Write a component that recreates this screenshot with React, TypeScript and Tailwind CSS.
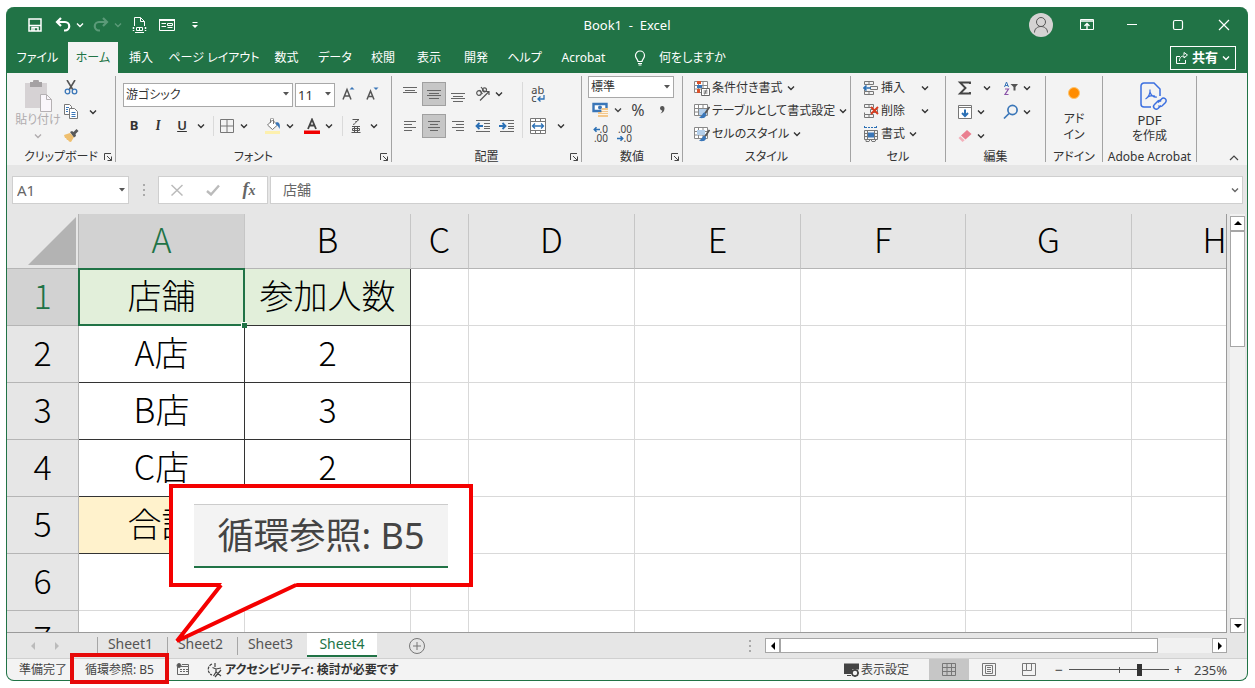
import { clsx } from "clsx";
import type { ReactNode } from "react";

const TABS = [
  { label: "ファイル", width: "w-[61px]" },
  { label: "ホーム", width: "w-[50px]", active: true },
  { label: "挿入", width: "w-[46px]" },
  { label: "ページ レイアウト", width: "w-[100px]" },
  { label: "数式", width: "w-[45px]" },
  { label: "データ", width: "w-[52px]" },
  { label: "校閲", width: "w-[44px]" },
  { label: "表示", width: "w-[48px]" },
  { label: "開発", width: "w-[46px]" },
  { label: "ヘルプ", width: "w-[51px]" },
  { label: "Acrobat", width: "w-[67px]" },
];

const COLUMNS = [
  { name: "A", width: "w-[166px]" },
  { name: "B", width: "w-[166px]" },
  { name: "C", width: "w-[58px]" },
  { name: "D", width: "w-[166px]" },
  { name: "E", width: "w-[166px]" },
  { name: "F", width: "w-[165px]" },
  { name: "G", width: "w-[166px]" },
  { name: "H", width: "w-[166px]" },
];

const ROWS = [
  ["店舗", "参加人数"],
  ["A店", "2"],
  ["B店", "3"],
  ["C店", "2"],
  ["合計", ""],
  [],
  [],
];

const SHEETS = ["Sheet1", "Sheet2", "Sheet3", "Sheet4"];

function Chevron({ className }: { className?: string }) {
  return (
    <svg className={clsx("h-2 w-2 shrink-0", className)} fill="none" stroke="currentColor" strokeWidth="1.4" viewBox="0 0 8 8">
      <path d="M1 2.5 4 5.5 7 2.5" />
    </svg>
  );
}

function Caret() {
  return (
    <svg className="pointer-events-none absolute right-1 top-1/2 h-1 w-1.5 -translate-y-1/2" viewBox="0 0 6 4">
      <path d="M0 0h6L3 3.6z" fill="#555" />
    </svg>
  );
}

function IconButton({
  label,
  className,
  active,
  children,
}: {
  label: string;
  className?: string;
  active?: boolean;
  children: ReactNode;
}) {
  return (
    <button
      aria-label={label}
      className={clsx(
        "flex h-6 shrink-0 items-center justify-center",
        active && "border border-[#a0a0a0] bg-[#c6c6c6]",
        className ?? "w-6",
      )}
      type="button"
    >
      {children}
    </button>
  );
}

function Menu({ label, className }: { label: string; className?: string }) {
  return (
    <IconButton className={className ?? "w-[18px]"} label={`${label}のオプション`}>
      <Chevron />
    </IconButton>
  );
}

function Group({
  title,
  width,
  launcher,
  children,
}: {
  title: string;
  width: string;
  launcher?: boolean;
  children: ReactNode;
}) {
  return (
    <section className={clsx("flex h-[86px] shrink-0 flex-col border-r border-[#a3a3a3]", width)}>
      <div className="h-[73px] shrink-0">{children}</div>
      <div className="flex h-4 shrink-0 items-center">
        {launcher ? <span className="w-3" /> : null}
        <h2 className="flex-1 whitespace-nowrap text-center text-xs leading-4">{title}</h2>
        {launcher ? (
          <button aria-label={`${title}の設定`} className="w-3" type="button">
            <svg className="h-2.5 w-2.5" fill="none" stroke="#444" viewBox="0 0 10 10">
              <path d="M1.5 8V1.5H8M4 4l4.5 4.5M8.5 4.5v4h-4" />
            </svg>
          </button>
        ) : null}
      </div>
    </section>
  );
}

/* Horizontal rules used by every alignment icon: [x, y, length] */
function Lines({ rows }: { rows: number[][] }) {
  return (
    <svg className="h-4 w-4" stroke="#666" viewBox="0 0 16 16">
      {rows.map(([x, y, length]) => (
        <path d={`M${x} ${y}.5h${length}`} key={y} />
      ))}
    </svg>
  );
}

function IndentIcon({ out }: { out?: boolean }) {
  return (
    <svg className="h-4 w-4" fill="none" viewBox="0 0 16 16">
      <path d="M1 2.5h14M9 5.5h6M9 8.5h6M9 10.5h6M1 13.5h14" stroke="#666" />
      <path d={out ? "M8 8H2M4.5 5 1.5 8l3 3" : "M0 8h6M3.5 5l3 3-3 3"} stroke="#2b70b5" strokeWidth="1.8" />
    </svg>
  );
}

function TableIcon({ variant }: { variant: "rules" | "table" | "cell" }) {
  return (
    <svg className="h-4 w-4 shrink-0" fill="none" viewBox="0 0 16 16">
      <path d="M.5 1.5h13v11H.5zM.5 5.5h13M.5 9h13M4.500 1.5v11M9 1.5v11" fill="#fff" stroke="#888" />
      {variant === "rules" ? (
        <>
          <path d="M3 1h4v3H3zM3 9h3v4H3z" fill="#d9532c" />
          <path d="M3 5h5v3H3z" fill="#3a76b8" />
          <path d="M7.5 8.5h8v7h-8z" fill="#fff" stroke="#666" />
          <path d="M9.500 11h4M9.500 13h4M12.500 9.5l-2 5" stroke="#555" strokeWidth=".8" />
        </>
      ) : (
        <>
          <path d={variant === "table" ? "M5 6h8v6H5z" : "M3 4h8v5H3z"} fill="#b4cfeb" />
          <path d="M15.500 4 11 10.500" stroke="#555" strokeWidth="1.800" />
          <path d="M10.5 9.5c-2 0-2 3.500-5.500 5 3 1.500 7.500.5 7-3z" fill="#3a76b8" />
        </>
      )}
    </svg>
  );
}

function CellIcon({ variant }: { variant: "insert" | "delete" | "format" }) {
  if (variant === "format") {
    return (
      <svg className="h-4 w-4 shrink-0" fill="none" viewBox="0 0 16 16">
        <path d="M1.500 0v3M13.500 0v3M2 1.500h11" stroke="#2b70b5" strokeDasharray="2 1" />
        <path d="M1.500 4.500h13v9h-13zM1.500 7.500h13M1.500 10.500h13M4.500 4.500v9M11.500 4.500v9M3 13.500v2h3l1-2h1l1 2h3l1-2" stroke="#777" />
        <path d="M5 6.500h6v5H5z" fill="#3a76b8" />
      </svg>
    );
  }
  return (
    <svg className="h-4 w-4 shrink-0" fill="none" viewBox="0 0 16 16">
      <path d="M1.500 1.500h9v3h-9zM6 1.500v3M1.500 11.500h9v3h-9zM6 11.500v3M1.500 9.500v2M7.500 6.500h7v3h-7z" stroke="#777" />
      {variant === "insert" ? (
        <path d="M8 8H1M3.500 5.500 1 8l2.500 2.500" stroke="#2b70b5" strokeWidth="1.600" />
      ) : (
        <path d="m8 4 7 7M15 4l-7 7" stroke="#d83b1e" strokeWidth="1.900" />
      )}
    </svg>
  );
}

function TitleBar() {
  return (
    <header className="grid h-[35px] grid-cols-[1fr_auto_1fr] items-center text-white">
      <div className="flex items-center pl-5">
        <IconButton className="w-4" label="上書き保存">
          <svg className="h-3.5 w-3.5" fill="none" stroke="#fff" strokeWidth="1.500" viewBox="0 0 14 14">
            <path d="M1 1h12v12H1zM1 7.500h12" />
            <path d="M4 13V9.500h6V13M6 10v3" />
          </svg>
        </IconButton>
        <IconButton className="ml-3 w-4" label="元に戻す">
          <svg className="h-4 w-4" fill="none" stroke="#fff" strokeWidth="2.200" viewBox="0 0 16 16">
            <path d="M6 1 2 5l4 4M2.500 5H10a4 4 0 0 1 0 8.500H9" />
          </svg>
        </IconButton>
        <Menu className="w-[18px]" label="元に戻す" />
        <span className="ml-1 flex text-[#5b9a78]">
          <IconButton className="w-4" label="やり直し">
            <svg className="h-4 w-4" fill="none" stroke="currentColor" strokeWidth="2.200" viewBox="0 0 16 16">
              <path d="m10 1 4 4-4 4M13.500 5H6a4 4 0 0 0 0 8.500h1" />
            </svg>
          </IconButton>
          <Menu className="w-[18px]" label="やり直し" />
        </span>
        <IconButton className="ml-1 w-4" label="印刷プレビュー">
          <svg className="h-4 w-4" fill="none" stroke="#fff" viewBox="0 0 16 16">
            <path d="M3.500 9V.5h6l4 4V9M9.500.5v4h4M4 15.500h9" />
            <path d="M2.500 10v4M14.500 10v4" strokeDasharray="2 1" strokeWidth="1.500" />
            <path d="M5.500 10.500h6v3h-6zM8.500 10.500v3" />
          </svg>
        </IconButton>
        <IconButton className="ml-3 w-4" label="フォーム">
          <svg className="h-4 w-4" fill="none" stroke="#fff" viewBox="0 0 16 16">
            <path d="M.5 2.500h15v11H.5zM2.500 6.500H7M2.500 9.500H7M8.500 6.500h5v2h-5zM8.500 10.500h5" />
            <path d="M0 3h16" strokeWidth="2" />
          </svg>
        </IconButton>
        <IconButton className="ml-3 w-4" label="クイック アクセス ツール バーのカスタマイズ">
          <svg className="h-2 w-2" fill="#fff" viewBox="0 0 8 8">
            <path d="M1.500 1h5v1h-5zM1 4h6L4 7z" />
          </svg>
        </IconButton>
      </div>
      <h1 className="whitespace-pre text-[13px] leading-4">Book1  -  Excel</h1>
      <div className="flex items-center justify-end">
        <button aria-label="アカウント" className="mr-[11px] flex h-6 w-6 justify-center overflow-hidden rounded-full bg-[#d5d3d3]" type="button">
          <svg className="h-6 w-6" fill="none" stroke="#555" viewBox="0 0 24 24">
            <circle cx="12" cy="9" r="4.500" />
            <path d="M5.500 19.500c0-8 13-8 13 0" />
          </svg>
        </button>
        <IconButton className="w-[45px]" label="リボンの表示オプション">
          <svg className="h-3.5 w-3.5" fill="none" stroke="#fff" viewBox="0 0 14 14">
            <path d="M.5 1.500h13v10H.5z" />
            <path d="M0 3h14M7 11V5.500M4.500 8 7 5.500 9.500 8" strokeWidth="1.400" />
          </svg>
        </IconButton>
        <IconButton className="w-[46px]" label="最小化">
          <svg className="h-3 w-3" stroke="#fff" viewBox="0 0 12 12">
            <path d="M1 5.500h10" />
          </svg>
        </IconButton>
        <IconButton className="w-[46px]" label="最大化">
          <svg className="h-3 w-3" fill="none" stroke="#fff" strokeWidth="1.200" viewBox="0 0 12 12">
            <rect height="9" rx="1.500" width="9" x="1.500" y="1.500" />
          </svg>
        </IconButton>
        <IconButton className="w-[46px]" label="閉じる">
          <svg className="h-3 w-3" stroke="#fff" strokeWidth="1.200" viewBox="0 0 12 12">
            <path d="m1 1 10 10M11 1 1 11" />
          </svg>
        </IconButton>
      </div>
    </header>
  );
}

function TabBar() {
  return (
    <nav className="flex h-[31px] items-center text-xs text-white">
      {TABS.map((tab) => (
        <button
          className={clsx(
            "h-full shrink-0 whitespace-nowrap text-center leading-4",
            tab.width,
            tab.active && "bg-[#f3f3f3] text-[#217346]",
          )}
          key={tab.label}
          type="button"
        >
          {tab.label}
        </button>
      ))}
      <button className="ml-4 flex shrink-0 items-center gap-3" type="button">
        <svg className="h-4 w-3.5" fill="none" stroke="#fff" strokeWidth="1.200" viewBox="0 0 14 16">
          <path d="M5 11.500c0-2-2.500-3-2.500-6a4.500 4.500 0 0 1 9 0c0 3-2.500 4-2.500 6zM5 13.500h4M5.500 15h3" />
        </svg>
        何をしますか
      </button>
      <button
        className="ml-auto mr-[11px] flex h-6 w-[66px] shrink-0 items-center justify-center gap-1 border border-white text-[13px] font-bold"
        type="button"
      >
        <svg className="h-3 w-3" fill="none" stroke="#fff" viewBox="0 0 12 12">
          <path d="M4 4.500H.5v7h9V8M3.500 9c0-4 2-5 4.500-5V6l3.500-3L8 .5V3" />
        </svg>
        共有
        <Chevron className="h-1.5 w-1.5" />
      </button>
    </nav>
  );
}

function ClipboardGroup() {
  return (
    <Group launcher title="クリップボード" width="w-[109px]">
      <div className="flex">
        <button className="ml-2 flex w-[46px] flex-col items-center pt-1 text-[#b0acae]" type="button">
          <svg className="h-8 w-8" viewBox="0 0 32 32">
            <path d="M3 3h22v25H3z" fill="#d6d2d4" />
            <path d="M8 2h3a3 3 0 0 1 6 0h3v5H8z" fill="#a5a1a3" />
            <path d="M18.500 14.500h6l5 5v12h-11z" fill="#faf6fb" stroke="#b5b1b3" />
            <path d="M24.500 14.500v5h5" fill="none" stroke="#b5b1b3" />
          </svg>
          <span className="whitespace-nowrap text-xs leading-4">貼り付け</span>
          <Chevron className="mt-1" />
        </button>
        <div className="grid grid-cols-[20px_24px] items-center">
          <IconButton className="w-5" label="切り取り">
            <svg className="h-4 w-4" fill="none" viewBox="0 0 16 16">
              <path d="M4 0l6 10M12 0 6 10" stroke="#555" strokeWidth="1.600" />
              <circle cx="4.500" cy="11.500" r="2.300" stroke="#3a76b8" strokeWidth="1.300" />
              <circle cx="11.500" cy="11.500" r="2.300" stroke="#3a76b8" strokeWidth="1.300" />
            </svg>
          </IconButton>
          <span />
          <IconButton className="w-5" label="コピー">
            <svg className="h-4 w-4" fill="#fff" stroke="#777" viewBox="0 0 16 16">
              <path d="M1.500.5h5l2 2v8h-7z" />
              <path d="M6.500 4.500h5l3 3v7h-8z" />
              <path d="M3 3.500h3M3 5.500h2M3 7.500h2M8.500 8.500h4M8.500 10.500h4M8.500 12.500h4" stroke="#3a76b8" />
            </svg>
          </IconButton>
          <Menu className="w-6" label="コピー" />
          <IconButton className="w-5" label="書式のコピー/貼り付け">
            <svg className="h-4 w-4" viewBox="0 0 16 16">
              <path d="m1 7 6-2 4 4-3 5-2-.5L5 12l-1 0-1-2-1 0z" fill="#efbf6f" />
              <path d="m7 4 2-1 1.500 1 3-3 2 2-3 3 .5 2L11 9.500z" fill="#595959" />
            </svg>
          </IconButton>
        </div>
      </div>
    </Group>
  );
}

function FontGroup() {
  return (
    <Group launcher title="フォント" width="w-[276px]">
      <div className="flex h-9 items-center gap-0.5 pl-[7px]">
        <label className="relative">
          <select aria-label="フォント" className="h-6 w-[170px] appearance-none border border-[#a8a8a8] bg-white pl-0.5 text-xs leading-4">
            <option>游ゴシック</option>
          </select>
          <Caret />
        </label>
        <label className="relative">
          <select aria-label="フォント サイズ" className="h-6 w-10 appearance-none border border-[#a8a8a8] bg-white pl-0.5 text-[13px] leading-4">
            <option>11</option>
          </select>
          <Caret />
        </label>
        <IconButton className="w-[22px]" label="フォント サイズの拡大">
          <svg className="h-4 w-4" fill="none" viewBox="0 0 16 16">
            <path d="m3 13.500 4-10 4 10M4.500 10h5" stroke="#555" strokeWidth="1.500" />
            <path d="m9.500 3.500 2.500-2.500 2.500 2.500z" fill="#3a76b8" />
          </svg>
        </IconButton>
        <IconButton className="w-[22px]" label="フォント サイズの縮小">
          <svg className="h-4 w-4" fill="none" viewBox="0 0 16 16">
            <path d="m3 13.500 3.500-8.500 3.500 8.500M4.500 10.500h4" stroke="#555" strokeWidth="1.500" />
            <path d="m9.500 1.500 2.500 2.500 2.500-2.500z" fill="#3a76b8" />
          </svg>
        </IconButton>
      </div>
      <div className="flex h-7 items-center pl-1.5 text-[13px] text-[#333]">
        <IconButton label="太字">
          <b>B</b>
        </IconButton>
        <IconButton label="斜体">
          <i className="font-serif font-bold">I</i>
        </IconButton>
        <IconButton label="下線">
          <u className="font-semibold">U</u>
        </IconButton>
        <Menu className="w-3.5" label="下線" />
        <span className="mx-[5px] h-5 w-px bg-[#dadada]" />
        <IconButton className="w-4" label="罫線">
          <svg className="h-3.5 w-3.5" fill="none" stroke="#777" viewBox="0 0 14 14">
            <path d="M.5.5h13v13H.5zM7 .5v13M.5 7h13" />
          </svg>
        </IconButton>
        <Menu label="罫線" />
        <IconButton className="ml-3 w-4" label="塗りつぶしの色">
          <svg className="h-4 w-4" fill="none" viewBox="0 0 16 16">
            <path d="M0 13h15v3H0z" fill="#fdf0ae" />
            <path d="m2.500 7 5-5 5 5-5 4.500zM5.500 5V1.500c0-2 3-2 3 0V6" fill="#fff" stroke="#777" />
            <path d="M11.500 4c3 0 4 3 3 7-1-2-1.500-3.500-4-5z" fill="#3a76b8" />
          </svg>
        </IconButton>
        <Menu label="塗りつぶしの色" />
        <IconButton className="ml-[5px] w-4" label="フォントの色">
          <svg className="h-4 w-4" fill="none" viewBox="0 0 16 16">
            <path d="M4 11 8 1.500 12 11M5.500 7.500h5" stroke="#444" strokeWidth="1.800" />
            <path d="M0 12.500h16V16H0z" fill="#f00000" />
          </svg>
        </IconButton>
        <Menu label="フォントの色" />
        <span className="mx-1 h-5 w-px bg-[#dadada]" />
        <IconButton className="w-[18px]" label="ふりがなの表示/非表示">
          <svg className="h-4 w-4" fill="none" stroke="#555" viewBox="0 0 16 16">
            <path d="M4.500 1.500H11l-3 2.500M8 3c0 2-1 3-3 3.500M4 8.500h8M6.500 8.500v6M9.500 8.500v6M4.500 10.500h7v2h-7zM3.500 14.500h9" />
          </svg>
        </IconButton>
        <Menu label="ふりがな" />
      </div>
    </Group>
  );
}

function AlignmentGroup() {
  return (
    <Group launcher title="配置" width="w-[190px]">
      <div className="flex items-start pl-1.5">
        <div className="w-[121px]">
          <div className="flex h-9 items-center">
            <IconButton label="上揃え">
              <Lines rows={[[1, 1, 14], [3, 4, 10], [1, 6, 14]]} />
            </IconButton>
            <IconButton active label="上下中央揃え">
              <Lines rows={[[1, 4, 14], [3, 7, 10], [1, 9, 14], [3, 12, 10]]} />
            </IconButton>
            <IconButton label="下揃え">
              <Lines rows={[[1, 7, 14], [3, 10, 10], [1, 12, 14], [3, 15, 10]]} />
            </IconButton>
            <IconButton className="ml-px w-6" label="方向">
              <svg className="h-4 w-4" fill="none" stroke="#555" strokeWidth="1.200" viewBox="0 0 16 16">
                <path d="M5 14.500 14 5.500M10.500 5.500H14V9" />
                <circle cx="4" cy="7" r="2.300" />
                <path d="m4.500 4 3 4M6 1l4 5" />
                <circle cx="9.500" cy="3.800" r="2" />
              </svg>
            </IconButton>
            <Menu className="w-2" label="方向" />
          </div>
          <div className="flex h-7 items-center">
            <IconButton label="左揃え">
              <Lines rows={[[2, 3, 12], [2, 6, 8], [2, 9, 12], [2, 12, 8]]} />
            </IconButton>
            <IconButton active label="中央揃え">
              <Lines rows={[[2, 3, 12], [4, 6, 8], [2, 9, 12], [4, 12, 8]]} />
            </IconButton>
            <IconButton label="右揃え">
              <Lines rows={[[2, 3, 12], [6, 6, 8], [2, 9, 12], [6, 12, 8]]} />
            </IconButton>
            <IconButton className="ml-px w-6" label="インデントを減らす">
              <IndentIcon out />
            </IconButton>
            <IconButton label="インデントを増やす">
              <IndentIcon />
            </IconButton>
          </div>
        </div>
        <span className="mx-[3px] mt-1.5 h-14 w-px bg-[#dadada]" />
        <div>
          <div className="flex h-9 items-center text-[11px] text-[#444]">
            <IconButton label="折り返して全体を表示する">
              <span className="text-left">
                <span className="block h-2 leading-[8px]">ab</span>
                <span className="flex h-2 items-center leading-[8px]">
                  c
                  <svg className="h-2 w-2" fill="none" stroke="#2b70b5" strokeWidth="1.300" viewBox="0 0 8 8">
                    <path d="M7 1v4H1.500M3.500 2.500 1 5l2.500 2.500" />
                  </svg>
                </span>
              </span>
            </IconButton>
          </div>
          <div className="flex h-7 items-center">
            <IconButton label="セルを結合して中央揃え">
              <svg className="h-4 w-4" fill="none" viewBox="0 0 16 16">
                <path d="M.5.5h15v15H.5zM.5 3.500h15M.5 12.500h15M5.500.5v3M10.500.5v3M5.500 12.500v3M10.500 12.500v3" fill="#fff" stroke="#777" />
                <path d="M2.500 8h11M5 5.500 2.500 8 5 10.500M11 5.500 13.500 8 11 10.500" stroke="#2b70b5" strokeWidth="1.300" />
              </svg>
            </IconButton>
            <Menu className="w-[22px]" label="セルの結合" />
          </div>
        </div>
      </div>
    </Group>
  );
}

function DecimalButton({ label, top, bottom, decrease }: { label: string; top: string; bottom: string; decrease?: boolean }) {
  const arrow = (
    <svg className="h-[7px] w-[7px]" fill="none" stroke="#2b70b5" strokeWidth="1.800" viewBox="0 0 8 8">
      <path d={decrease ? "M0 4h6M4 1.500 6.500 4 4 6.500" : "M8 4H2M4 1.500 1.500 4 4 6.500"} />
    </svg>
  );
  return (
    <button aria-label={label} className="flex h-6 w-6 flex-col items-end justify-center pr-1 text-[10px] leading-[9px]" type="button">
      <span className="flex items-center">
        {decrease ? null : arrow}
        {top}
      </span>
      <span className="flex items-center">
        {decrease ? arrow : null}
        {bottom}
      </span>
    </button>
  );
}

function NumberGroup() {
  return (
    <Group launcher title="数値" width="w-[101px]">
      <div className="pl-1.5">
        <label className="relative block h-[22px] w-[86px]">
          <select aria-label="表示形式" className="block h-[22px] w-full appearance-none border border-[#a8a8a8] bg-white pl-0.5 text-xs leading-4">
            <option>標準</option>
          </select>
          <Caret />
        </label>
        <div className="flex h-6 items-center text-[#444]">
          <IconButton label="通貨表示形式">
            <svg className="h-4 w-4" fill="none" viewBox="0 0 16 16">
              <path d="M1.500 2h13v7h-13z" fill="#fff" stroke="#3a76b8" strokeWidth="2.400" />
              <circle cx="8" cy="5.500" fill="#3a76b8" r="2" />
              <path d="M9.500 6h6.500v9H9.500zM6 10h4v5H6z" fill="#f3c78b" />
              <path d="M9.500 8.500H16M9.500 10.500H16M6 12.500h10" stroke="#fff" strokeWidth=".8" />
            </svg>
          </IconButton>
          <Menu className="w-3" label="通貨表示形式" />
          <IconButton className="ml-0.5 w-6" label="パーセント スタイル">
            <span className="text-base leading-4">%</span>
          </IconButton>
          <IconButton label="桁区切りスタイル">
            <svg className="h-3 w-3" viewBox="0 0 12 12">
              <path d="M4 4a2.200 2.200 0 1 1 4.500.5C8.500 7 7 9 4.500 9.500c1-.8 1.700-2 1.700-3C5 6.500 4 5.500 4 4z" fill="#555" />
            </svg>
          </IconButton>
        </div>
        <div className="flex h-6 items-center text-[#444]">
          <DecimalButton bottom=".00" label="小数点以下の表示桁数を増やす" top=".0" />
          <DecimalButton bottom=".0" decrease label="小数点以下の表示桁数を減らす" top=".00" />
        </div>
      </div>
    </Group>
  );
}

function TextCommand({ icon, label, wide }: { icon: ReactNode; label: string; wide?: boolean }) {
  return (
    <button className="flex h-[23px] items-center whitespace-nowrap text-xs leading-4" type="button">
      {icon}
      <span className="ml-0.5">{label}</span>
      <Chevron className={wide ? "ml-4" : "ml-1"} />
    </button>
  );
}

function EditingGroup() {
  return (
    <Group title="編集" width="w-[100px]">
      <div className="grid h-[70px] grid-cols-[46px_40px] pl-[11px]">
        <div className="flex items-center">
          <IconButton className="w-4" label="オート SUM">
            <svg className="h-4 w-4" fill="none" stroke="#444" strokeWidth="1.900" viewBox="0 0 16 16">
              <path d="M13 4V2.500H3L8.500 8 3 13.500h10V12" />
            </svg>
          </IconButton>
          <Menu className="ml-1.5 w-4" label="オート SUM" />
        </div>
        <div className="flex items-center">
          <IconButton className="w-4" label="並べ替えとフィルター">
            <svg className="h-4 w-4" fill="none" viewBox="0 0 16 16">
              <path d="m1.500 7 2-5 2 5M2 5.500h3" stroke="#3a76b8" />
              <path d="M2 9h3.500L2 14.500h3.500" stroke="#8a52a8" strokeWidth="1.200" />
              <path d="M7.500 4H15l-2.500 3v3.500h-2V7z" fill="#555" />
            </svg>
          </IconButton>
          <Menu className="w-4" label="並べ替えとフィルター" />
        </div>
        <div className="flex items-center">
          <IconButton className="w-4" label="フィル">
            <svg className="h-4 w-4" fill="none" viewBox="0 0 16 16">
              <path d="M1.500 1.500h13v13h-13zM1.500 3.500h13" fill="#fff" stroke="#777" />
              <path d="M8 5.500V12M5 9l3 3 3-3" stroke="#2b70b5" strokeWidth="2" />
            </svg>
          </IconButton>
          <Menu className="w-4" label="フィル" />
        </div>
        <div className="flex items-center">
          <IconButton className="w-4" label="検索と選択">
            <svg className="h-4 w-4" fill="none" stroke="#3a76b8" strokeWidth="1.700" viewBox="0 0 16 16">
              <circle cx="9.500" cy="6" r="4.600" />
              <path d="m6 9.500-5 5" />
            </svg>
          </IconButton>
          <Menu className="w-4" label="検索と選択" />
        </div>
        <div className="flex items-center">
          <IconButton className="w-4" label="クリア">
            <svg className="h-4 w-4" viewBox="0 0 16 16">
              <path d="m10 2 4.500 4-6 5.500L4 7.500z" fill="#ea7f90" />
              <path d="M3.300 8.200 7.700 12.200 5.500 14 1.500 10z" fill="#f3b1bb" />
            </svg>
          </IconButton>
          <Menu className="w-4" label="クリア" />
        </div>
      </div>
    </Group>
  );
}

function Ribbon() {
  return (
    <div className="flex h-[92px] bg-[#f3f3f3] pt-[3px]">
      <ClipboardGroup />
      <FontGroup />
      <AlignmentGroup />
      <NumberGroup />
      <Group title="スタイル" width="w-[168px]">
        <div className="pl-[11px]">
          <TextCommand icon={<TableIcon variant="rules" />} label="条件付き書式" />
          <TextCommand icon={<TableIcon variant="table" />} label="テーブルとして書式設定" />
          <TextCommand icon={<TableIcon variant="cell" />} label="セルのスタイル" />
        </div>
      </Group>
      <Group title="セル" width="w-[95px]">
        <div className="pl-3">
          <TextCommand icon={<CellIcon variant="insert" />} label="挿入" wide />
          <TextCommand icon={<CellIcon variant="delete" />} label="削除" wide />
          <TextCommand icon={<CellIcon variant="format" />} label="書式" />
        </div>
      </Group>
      <EditingGroup />
      <Group title="アドイン" width="w-[57px]">
        <button className="flex w-full flex-col items-center pt-[11px] text-xs leading-4" type="button">
          <span className="mb-3 h-3 w-3 rounded-full border border-[#ffc46b] bg-[#ff8c00]" />
          <span>アド</span>
          <span>イン</span>
        </button>
      </Group>
      <Group title="Adobe Acrobat" width="w-[94px]">
        <button className="flex w-full flex-col items-center pt-1.5 text-xs leading-4" type="button">
          <svg className="mb-0.5 ml-1.5 h-7 w-7" fill="none" stroke="#3b6fe0" strokeWidth="1.500" viewBox="0 0 28 28">
            <path d="M12 25H5a3 3 0 0 1-3-3V4a3 3 0 0 1 3-3h10l6 6v7" />
            <path d="M6.500 17c3-1.500 5-6 4.500-9.500M11 10c1 3 3 5.500 7 5M8 15.500c2-1.500 6-2 8-1.500" strokeWidth="1.200" />
            <path d="m19 20.500 3.500-3.500a2.500 2.500 0 0 1 4 3.500l-3.500 3.500c-1.500 1-3 .5-3.500-.5M22 19.500c-1-1.500-2.500-1-3.500 0L15.500 22.500a2.500 2.500 0 0 0 3.500 4l3-3" />
          </svg>
          <span className="text-[13px]">PDF</span>
          <span>を作成</span>
        </button>
      </Group>
      <button aria-label="リボンを折りたたむ" className="ml-auto mr-2 flex items-end pb-0.5" type="button">
        <svg className="h-2.5 w-2.5" fill="none" stroke="#444" strokeWidth="1.200" viewBox="0 0 10 10">
          <path d="m1 7 4-4 4 4" />
        </svg>
      </button>
    </div>
  );
}

function SplitDots() {
  return (
    <svg className="h-3 w-0.5 shrink-0" fill="#aaa" viewBox="0 0 2 12">
      <path d="M0 0h2v2H0zM0 5h2v2H0zM0 10h2v2H0z" />
    </svg>
  );
}

function FormulaBar() {
  return (
    <div className="flex h-[49px] items-start bg-[#e6e6e6] pl-[5px] pr-1 pt-[11px] text-[#666]">
      <label className="relative">
        <input aria-label="名前ボックス" className="h-7 w-[117px] border border-[#cfcfcf] bg-white pl-1 text-[15px]" defaultValue="A1" />
        <Caret />
      </label>
      <span className="flex h-7 w-[29px] items-center justify-center">
        <SplitDots />
      </span>
      <div className="flex h-7 w-[110px] items-center border border-[#cfcfcf] bg-white">
        <IconButton className="w-9" label="キャンセル">
          <svg className="h-3 w-3" stroke="#bbb" strokeWidth="1.500" viewBox="0 0 12 12">
            <path d="m.5 1 11 10.500M11.500 1 .5 11.500" />
          </svg>
        </IconButton>
        <IconButton className="w-9" label="入力">
          <svg className="h-3 w-3.5" fill="none" stroke="#bbb" strokeWidth="2.400" viewBox="0 0 14 12">
            <path d="m1 7 4 3.500 8-9" />
          </svg>
        </IconButton>
        <IconButton className="w-9" label="関数の挿入">
          <i className="font-['Liberation_Serif',serif] text-lg font-bold leading-5 text-[#666]">
            f<span className="text-sm">x</span>
          </i>
        </IconButton>
      </div>
      <label className="relative ml-0.5 flex-1">
        <input aria-label="数式バー" className="h-7 w-full border border-[#cfcfcf] bg-white pb-0.5 pl-3 text-sm" defaultValue="店舗" />
        <Chevron className="pointer-events-none absolute right-1 top-2.5" />
      </label>
    </div>
  );
}

function Sheet() {
  return (
    <div className="flex min-h-0 flex-1 bg-[#e6e6e6]">
      <div className="min-w-0 flex-1 overflow-hidden border-b border-r border-[#9a9a9a] bg-white">
        <table className="w-[1291px] table-fixed border-separate border-spacing-0 text-center font-['Noto_Sans_CJK_JP',sans-serif] text-[34px] font-light leading-[50px] text-black">
          <thead>
            <tr className="h-[55px] bg-[#e6e6e6]">
              <th className="w-[72px] border-b border-r border-[#b5b5b5] p-0">
                <svg className="ml-auto mr-0.5 h-12 w-12" viewBox="0 0 48 48">
                  <path d="M48 0v48H0z" fill="#b3b3b3" />
                </svg>
              </th>
              {COLUMNS.map((column, index) => (
                <th
                  className={clsx(
                    "border-b border-r border-b-[#b5b5b5] border-r-[#c6c6c6] px-0 pb-1 pt-0 font-light",
                    column.width,
                    index === 0 && "bg-[#d2d2d2] text-[#217346]",
                  )}
                  key={column.name}
                  scope="col"
                >
                  {column.name}
                </th>
              ))}
            </tr>
          </thead>
          <tbody>
            {ROWS.map((row, rowIndex) => (
              <tr className="h-[57px]" key={rowIndex}>
                <th
                  className={clsx(
                    "border-b border-r border-[#b5b5b5] px-0 pb-1 pt-0 font-light",
                    rowIndex === 0 ? "bg-[#d2d2d2] text-[#217346]" : "bg-[#e6e6e6]",
                  )}
                  scope="row"
                >
                  {rowIndex + 1}
                </th>
                {COLUMNS.map((column, index) => {
                  const filled = index < row.length;
                  const selected = rowIndex === 0 && index === 0;
                  return (
                    <td
                      className={clsx(
                        "whitespace-nowrap border-b border-r px-0 pb-1 pt-0",
                        filled ? "border-[#333]" : "border-[#d9d9d9]",
                        filled && rowIndex === 0 && "bg-[#e2efda]",
                        filled && rowIndex === 4 && "bg-[#fff2cc]",
                        selected && "relative",
                      )}
                      key={column.name}
                    >
                      {row[index]}
                      {selected ? (
                        <span className="absolute -inset-px border-2 border-[#217346]">
                          <span className="absolute -bottom-1 -right-1 h-1.5 w-1.5 border-l border-t border-white bg-[#217346]" />
                        </span>
                      ) : null}
                    </td>
                  );
                })}
              </tr>
            ))}
          </tbody>
        </table>
      </div>
      <div className="ml-[3px] mr-0.5 flex w-[15px] shrink-0 flex-col bg-[#f1f1f1] pt-0.5">
        <ScrollButton direction="up" />
        <div className="h-[116px] border border-[#a6a6a6] bg-white" />
        <span className="flex-1" />
        <ScrollButton direction="down" />
      </div>
    </div>
  );
}

const ARROWS = {
  up: "M1 6h8L5 2z",
  down: "M1 3h8L5 7z",
  left: "M7 1v8L3 5z",
  right: "M3 1v8l4-4z",
};

function ScrollButton({ direction }: { direction: keyof typeof ARROWS }) {
  return (
    <button
      aria-label={`scroll ${direction}`}
      className="flex h-[15px] w-[15px] shrink-0 items-center justify-center border border-[#a6a6a6] bg-white"
      type="button"
    >
      <svg className="h-2.5 w-2.5" viewBox="0 0 10 10">
        <path d={ARROWS[direction]} />
      </svg>
    </button>
  );
}

function SheetTabs() {
  return (
    <div className="flex h-[26px] shrink-0 items-center border-b border-[#d0d0d0] bg-[#e6e6e6] text-sm text-[#555]">
      <span className="flex w-[90px] gap-4 pl-[22px]">
        <svg className="h-2 w-2" fill="#bbb" viewBox="0 0 8 8">
          <path d="M6 0v8L2 4z" />
        </svg>
        <svg className="h-2 w-2" fill="#bbb" viewBox="0 0 8 8">
          <path d="M2 0v8l4-4z" />
        </svg>
      </span>
      {SHEETS.map((name) => {
        const active = name === "Sheet4";
        return (
          <button
            className={clsx(
              "w-[70px] shrink-0 text-center",
              active
                ? "-mt-0.5 h-6 border-b-2 border-[#217346] bg-white leading-5 text-[#217346]"
                : "h-[18px] border-l border-[#a6a6a6] pb-1 pr-1 leading-[14px]",
            )}
            key={name}
            type="button"
          >
            {name}
          </button>
        );
      })}
      <button aria-label="新しいシート" className="ml-8" type="button">
        <svg className="h-4 w-4" fill="none" stroke="#777" viewBox="0 0 16 16">
          <circle cx="8" cy="8" r="7.500" />
          <path d="M8 4v8M4 8h8" />
        </svg>
      </button>
      <span className="ml-auto flex items-center pr-5">
        <SplitDots />
        <span className="ml-3.5 flex w-[462px] bg-[#f1f1f1]">
          <ScrollButton direction="left" />
          <span className="h-[15px] w-[378px] border border-[#a6a6a6] bg-white" />
          <span className="flex-1" />
          <ScrollButton direction="right" />
        </span>
      </span>
    </div>
  );
}

function StatusBar() {
  return (
    <footer className="flex h-[21px] shrink-0 items-center rounded-b-[7px] bg-[#f3f3f3] text-xs leading-4 text-[#444]">
      <span className="w-[63px] shrink-0 pl-3">準備完了</span>
      <span className="relative flex h-full w-[99px] shrink-0 items-center justify-center">
        循環参照: B5
        <span className="absolute -bottom-1 -top-1.5 left-0 right-0 border-4 border-[#e60a0a]" />
      </span>
      <svg className="ml-[7px] h-3.5 w-3.5 shrink-0" fill="none" stroke="#666" viewBox="0 0 14 14">
        <path d="M1.500 3.500h11v8h-11zM4 6.500h2M7 6.500h2M10 6.500h2M4 8.500h2M7 8.500h2M10 8.500h2M6 1.500h6.500M12.500 1.500v2" />
        <circle cx="3" cy="2.500" fill="#555" r="2" />
      </svg>
      <svg className="ml-[17px] h-4 w-4 shrink-0" fill="none" stroke="#444" strokeWidth="1.200" viewBox="0 0 16 16">
        <path d="M5 2C0 4 0 11 5 13" strokeDasharray="3 1" />
        <path d="M8 1v4M5.500 5.500 9 7l5-1M9 7v3l-2.500 4M9 10l5 4M14 8l-6 7" />
      </svg>
      <span className="ml-0.5 whitespace-nowrap font-bold text-[#333]">アクセシビリティ: 検討が必要です</span>
      <button className="ml-auto flex shrink-0 items-center gap-px whitespace-nowrap" type="button">
        <svg className="h-4 w-4" fill="none" viewBox="0 0 16 16">
          <path d="M0 1.500h15v6H8V12H0zM3 13h4v1H3z" fill="#444" />
          <circle cx="11" cy="11" fill="#f3f3f3" r="3" stroke="#444" strokeWidth="1.500" />
          <path d="M11 7v1.500M11 13.500V15M7 11h1.500M13.500 11H15M8.200 8.200l1 1M12.800 12.800l1 1M13.800 8.200l-1 1M9.200 12.800l-1 1" stroke="#444" strokeWidth="1.500" />
        </svg>
        表示設定
      </button>
      <IconButton className="ml-5 h-full w-10 bg-[#c6c6c6]" label="標準">
        <svg className="h-3.5 w-3.5" fill="none" stroke="#777" viewBox="0 0 14 14">
          <path d="M.5.5h13v12H.5zM.5 4.500h13M.5 8.500h13M5 .5v12M9.500.5v12" />
        </svg>
      </IconButton>
      <IconButton className="h-full w-10" label="ページ レイアウト">
        <svg className="h-3.5 w-3.5" fill="none" stroke="#777" viewBox="0 0 14 14">
          <path d="M.5.5h13v12H.5zM3.500 2.500h7v8h-7zM5 4.500h4M5 6.500h4M5 8.500h4" />
        </svg>
      </IconButton>
      <IconButton className="h-full w-10" label="改ページ プレビュー">
        <svg className="h-3.5 w-3.5" fill="none" stroke="#777" viewBox="0 0 14 14">
          <path d="M.5.5h13v12H.5zM4.500.5v7H.5M9.500.5v7h-5" />
        </svg>
      </IconButton>
      <button className="w-5 text-center text-sm" type="button">
        −
      </button>
      <span className="relative flex h-full w-[100px] items-center">
        <span className="absolute left-1/2 top-2 h-1.5 w-px bg-[#555]" />
        <input
          aria-label="ズーム"
          className="relative h-px w-full appearance-none bg-[#555] [&::-webkit-slider-thumb]:h-3 [&::-webkit-slider-thumb]:w-[5px] [&::-webkit-slider-thumb]:appearance-none [&::-webkit-slider-thumb]:bg-[#333]"
          defaultValue={72}
          type="range"
        />
      </span>
      <button className="w-[18px] text-center text-sm" type="button">
        +
      </button>
      <span className="w-[60px] pl-[7px] text-[13px]">235%</span>
    </footer>
  );
}

/* Callout that magnifies the circular reference warning of the status bar */
function Callout() {
  return (
    <aside className="absolute bottom-[35px] left-[162px] w-[304px]">
      <div className="h-[103px] border-4 border-[#f40000] bg-white px-[21px] pt-4">
        <p className="h-16 whitespace-nowrap border-b-2 border-t border-b-[#217346] border-t-[#ccc] bg-[#f3f3f3] text-center text-[36px] leading-[62px] text-[#444]">
          循環参照: B5
        </p>
      </div>
      <svg className="-mt-1 h-[62px] w-full" fill="#fff" viewBox="0 0 304 62">
        <path d="M53 0 5 60 128 0" />
        <path d="M52 2 8 58 127 2" fill="none" stroke="#f40000" strokeWidth="4" />
      </svg>
    </aside>
  );
}

export default function App() {
  return (
    <div className="flex h-screen min-h-[500px] flex-col bg-white pb-[7px] pl-1.5 pr-[7px] pt-[7px] font-['Noto_Sans','Noto_Sans_CJK_JP',sans-serif] text-[#333] [font-feature-settings:'palt']">
      <main className="relative flex min-h-0 flex-1 flex-col rounded-lg border-x border-b border-[#217346] bg-[#217346]">
        <TitleBar />
        <TabBar />
        <Ribbon />
        <FormulaBar />
        <Sheet />
        <SheetTabs />
        <StatusBar />
        <Callout />
      </main>
    </div>
  );
}
